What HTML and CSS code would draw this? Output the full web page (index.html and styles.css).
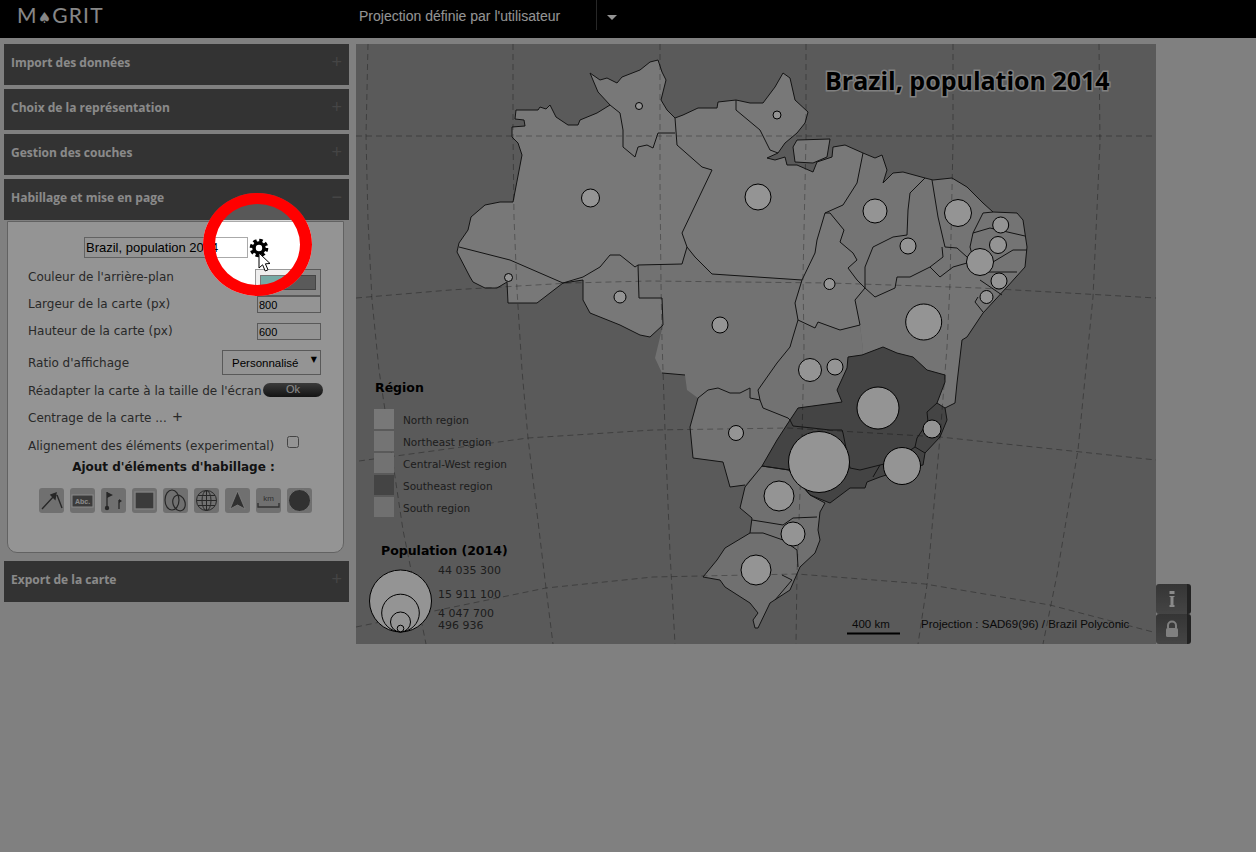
FILE: index.html
```html
<!DOCTYPE html>
<html lang="fr">
<head>
<meta charset="utf-8">
<title>Magrit</title>
<link rel="stylesheet" href="styles.css">
</head>
<body>
<div class="topbar">
  <div class="logo">M<span class="spade">♠</span>GRIT</div>
  <div class="projname">Projection définie par l'utilisateur</div>
  <div class="caretbox"><span class="caret"></span></div>
</div>
<div class="main">
  <div class="sidebar">
    <div class="acc"><span>Import des données</span><b>+</b></div>
    <div class="acc"><span>Choix de la représentation</span><b>+</b></div>
    <div class="acc"><span>Gestion des couches</span><b>+</b></div>
    <div class="acc acc-open"><span>Habillage et mise en page</span><b>−</b></div>
    <div class="panel">
      <div class="titlerow">
        <input class="titleinput" type="text" value="Brazil, population 2014">
        <svg class="gear" width="20" height="20" viewBox="0 0 20 20">
          <circle cx="10" cy="10" r="7.6" fill="none" stroke="#000" stroke-width="3.4" stroke-dasharray="3.4 2.57"/>
          <circle cx="10" cy="10" r="5" fill="none" stroke="#000" stroke-width="3.6"/>
        </svg>
      </div>
      <div class="row row-color"><label>Couleur de l'arrière-plan</label><span class="colorbtn"><span class="colorfill"></span></span></div>
      <div class="row row-w"><label>Largeur de la carte (px)</label><input class="numinput" type="text" value="800"></div>
      <div class="row row-h"><label>Hauteur de la carte (px)</label><input class="numinput" type="text" value="600"></div>
      <div class="row row-ratio"><label>Ratio d'affichage</label><span class="selectwrap"><select class="ratio"><option>Personnalisé</option></select></span></div>
      <div class="row row-fit"><label>Réadapter la carte à la taille de l'écran</label><span class="okbtn">Ok</span></div>
      <div class="row row-center"><label>Centrage de la carte ... <span class="addplus">+</span></label></div>
      <div class="row row-align"><label>Alignement des éléments (experimental)</label><input class="check" type="checkbox"></div>
      <div class="addtitle">Ajout d'éléments d'habillage :</div>
      <div class="tools">
        <span class="tool"><svg viewBox="0 0 25 25"><path d="M3 21 L15 8 M12 7 L17 5 L16 11 Z M18 7 L23 20" fill="#444" stroke="#444" stroke-width="1.4"/></svg></span>
        <span class="tool"><svg viewBox="0 0 25 25"><rect x="2" y="7" width="21" height="12" fill="#666" stroke="#eee"/><text x="12.5" y="16" class="abc">Abc.</text></svg></span>
        <span class="tool"><svg viewBox="0 0 25 25"><path d="M6 4 V19 M18 12 V21" stroke="#444" stroke-width="1.3"/><path d="M6 4 L12 7 L6 10 Z M18 11 L21 13 L18 15 Z" fill="#444"/><circle cx="6" cy="20" r="2.2" fill="#444"/></svg></span>
        <span class="tool"><svg viewBox="0 0 25 25"><rect x="3" y="4" width="19" height="17" fill="#666" stroke="#ddd" stroke-width="1.4"/></svg></span>
        <span class="tool"><svg viewBox="0 0 25 25"><ellipse cx="9" cy="12" rx="7" ry="10" fill="none" stroke="#444" stroke-width="1.2"/><ellipse cx="16" cy="15" rx="6" ry="8" fill="none" stroke="#444" stroke-width="1.2" transform="rotate(-20 16 15)"/></svg></span>
        <span class="tool"><svg viewBox="0 0 25 25" fill="none" stroke="#444"><circle cx="12.5" cy="12.5" r="10"/><ellipse cx="12.5" cy="12.5" rx="4.5" ry="10"/><path d="M12.5 2.5 V22.5 M2.5 12.5 H22.5 M4 7.5 H21 M4 17.5 H21"/></svg></span>
        <span class="tool"><svg viewBox="0 0 25 25"><path d="M12.5 3 L20 21 L12.5 17 L5 21 Z" fill="#555" stroke="#ddd" stroke-width=".8"/></svg></span>
        <span class="tool"><svg viewBox="0 0 25 25"><text x="12.5" y="13" class="km">km</text><path d="M2 15 V19 H23 V15" fill="none" stroke="#555" stroke-width="1.4"/></svg></span>
        <span class="tool"><svg viewBox="0 0 25 25"><circle cx="12.5" cy="12.5" r="11" fill="#555" stroke="#ddd" stroke-width=".8"/></svg></span>
      </div>
    </div>
    <div class="acc acc-export"><span>Export de la carte</span><b>+</b></div>
  </div>

  <svg class="map" width="800" height="600" viewBox="356 44 800 600">
    <!-- regions -->
    <path class="r-north" d="M457 252 L459 243 468 230 471 217 485 205 500 202 513 202 522 155 518 143 512 137 512 127 525 126 524 120 515 119 516 110 538 110 540 107 546 109 550 105 556 117 568 125 578 125 580 120 597 113 610 105 598 92 590 73 600 80 607 78 617 83 622 77 640 70 650 62 658 60 662 72 666 80 661 100 667 110 675 118 683 115 698 108 717 108 718 102 736 100 750 103 763 103 775 87 783 73 790 78 795 100 808 112 805 123 797 133 785 143 778 153 767 158 775 160 785 157 787 165 797 165 813 172 817 162 832 157 833 147 845 145 863 153 857 183 843 205 825 213 830 213 844 230 840 242 853 253 857 260 848 268 857 280 865 288 855 300 860 325 840 330 818 322 815 328 798 320 795 303 802 280 712 274 695 257 687 247 682 264 638 265 639 298 662 298 663 325 650 337 640 335 620 325 590 313 583 300 583 280 563 283 537 303 508 303 507 282 497 288 485 288 473 282 470 277 Z"/>
    <path class="r-north" d="M793 147 L797 140 830 139 827 157 813 163 795 162 Z"/>
    <path class="r-cw" d="M638 265 L682 264 687 247 695 257 712 274 802 280 795 303 798 320 815 328 818 322 840 330 860 325 863 350 862 355 848 357 847 368 837 390 842 402 798 408 790 420 777 440 762 466 745 485 730 487 723 462 693 458 690 427 698 398 687 390 685 375 662 373 655 358 663 325 662 298 639 298 Z"/>
    <path class="r-ne" d="M863 153 L875 158 882 155 887 170 883 183 893 173 903 172 925 178 933 180 952 178 967 187 983 203 993 212 1017 213 1023 220 1027 247 1025 267 1007 287 983 313 967 337 962 340 957 383 955 403 945 408 937 403 945 382 945 375 927 370 913 357 897 353 883 347 862 355 863 350 860 325 855 300 865 288 857 280 848 268 857 260 853 253 840 242 844 230 830 213 825 213 843 205 857 183 Z"/>
    <path class="r-se" d="M790 420 L798 408 842 402 837 390 847 368 848 357 862 355 883 347 897 353 913 357 927 370 945 375 945 382 937 403 945 408 947 420 940 437 925 453 923 465 908 468 880 477 867 482 865 488 850 488 830 503 810 495 789 470 762 466 777 440 Z"/>
    <path class="r-south" d="M762 466 L789 470 810 495 825 503 820 512 818 530 820 540 815 553 800 567 790 590 770 603 758 628 755 628 753 620 758 613 750 603 725 587 720 580 703 577 717 560 725 548 750 533 752 518 740 508 745 487 Z"/>
    <!-- graticule -->
    <g class="grat">
      <path d="M356 136 H1156"/>
      <path d="M356 298 L450 290 570 283 650 281 830 283 980 288 1156 298"/>
      <path d="M359 461 L528 438 653 430 788 428 940 437 1156 460"/>
      <path d="M356 627 L546 588 653 577 797 574 925 584 1050 605 1153 632"/>
      <path d="M368 44 L366 136 368 220 372 300 379 370 403 530 426 644"/>
      <path d="M513 44 V133 L514 217 517 290 522 370 528 438 546 588 553 644"/>
      <path d="M660 44 V183 L661 283 662 340 665 430 670 553 675 644"/>
      <path d="M806 44 V140 L803 277 804 347 802 440 797 573 796 644"/>
      <path d="M953 44 V143 L950 283 947 347 940 437 927 585 918 644"/>
      <path d="M1099 44 L1100 143 1093 297 1078 450 1057 575 1043 644"/>
    </g>
    <!-- outlines, same points as above plus the inner borders -->
    <g class="borders">
      <path d="M457 252 L459 243 468 230 471 217 485 205 500 202 513 202 522 155 518 143 512 137 512 127 525 126 524 120 515 119 516 110 538 110 540 107 546 109 550 105 556 117 568 125 578 125 580 120 597 113 610 105 598 92 590 73 600 80 607 78 617 83 622 77 640 70 650 62 658 60 662 72 666 80 661 100 667 110 675 118 683 115 698 108 717 108 718 102 736 100 750 103 763 103 775 87 783 73 790 78 795 100 808 112 805 123 797 133 785 143 778 153 767 158 775 160 785 157 787 165 797 165 813 172 817 162 832 157 833 147 845 145 863 153 857 183 843 205 825 213 830 213 844 230 840 242 853 253 857 260 848 268 857 280 865 288 855 300 860 325 840 330 818 322 815 328 798 320 795 303 802 280 712 274 695 257 687 247 682 264 638 265 639 298 662 298 663 325 650 337 640 335 620 325 590 313 583 300 583 280 563 283 537 303 508 303 507 282 497 288 485 288 473 282 470 277 Z"/>
      <path d="M793 147 L797 140 830 139 827 157 813 163 795 162 Z"/>
      <path d="M459 247 L510 260 563 283 M610 105 L620 113 623 130 623 147 635 157 638 147 647 145 653 148 658 133 675 133 M675 118 L677 145 702 167 712 170 682 233 687 247 M563 283 L583 277 600 267 610 255 620 255 635 267 638 265 M736 100 L736 110 760 130 770 150 778 153 M825 213 L817 240 815 253 802 280"/>
      <path d="M798 320 L792 340 790 347 777 363 758 390 760 400 750 398 750 388 740 393 730 393 718 388 708 390 698 398 M760 400 L763 408 788 418 790 420 M662 373 L685 375"/>
      <path d="M863 153 L875 158 882 155 887 170 883 183 893 173 903 172 925 178 933 180 952 178 967 187 983 203 993 212 1017 213 1023 220 1027 247 1025 267 1007 287 983 313 967 337 962 340 957 383 955 403 945 408"/>
      <path d="M925 178 L910 193 908 210 907 235 893 237 873 247 865 267 865 288 875 297 895 288 897 277 910 277 930 267 943 257 942 247 M932 180 L938 217 945 247 957 248 967 257 M930 267 L940 277 953 267 967 263 M993 212 L983 213 973 233 970 247 973 258 M973 233 L990 228 1025 236 M993 262 L1013 250 1027 250 M977 272 L1017 272 M980 280 L1002 295 M978 297 L975 302 983 312"/>
      <path d="M790 420 L798 408 842 402 837 390 847 368 848 357 862 355 883 347 897 353 913 357 927 370 945 375 945 382 937 403 945 408 947 420 940 437 925 453 923 465 908 468 880 477 867 482 865 488 850 488 830 503 810 495 789 470 762 466 777 440 Z"/>
      <path d="M937 403 L927 412 928 422 917 438 915 447 925 453 M915 447 L893 462 880 465 860 470 850 468 843 433 842 430 830 430 812 428 793 426 790 420 M880 465 L873 477"/>
      <path d="M762 466 L789 470 810 495 825 503 820 512 818 530 820 540 815 553 800 567 790 590 770 603 758 628 755 628 753 620 758 613 750 603 725 587 720 580 703 577 717 560 725 548 750 533 752 518 740 508 745 487 Z"/>
      <path d="M752 520 L783 525 793 518 817 517 M750 533 L763 533 783 540 797 550 798 567 M782 575 L792 580 775 600"/>
      <path d="M745 485 L730 487 723 462 693 458 690 427 698 398"/>
    </g>
    <!-- population circles -->
    <g class="props">
      <circle cx="639" cy="106" r="3.5"/><circle cx="777" cy="115" r="4"/><circle cx="590.5" cy="198" r="9"/>
      <circle cx="758" cy="197" r="13"/><circle cx="508.5" cy="277.5" r="4"/><circle cx="620" cy="297" r="6"/>
      <circle cx="720" cy="325" r="8"/><circle cx="829.5" cy="284" r="5.5"/><circle cx="875" cy="211" r="12"/>
      <circle cx="908" cy="246" r="8"/><circle cx="958" cy="213" r="13.5"/><circle cx="1000.7" cy="225" r="8"/>
      <circle cx="998" cy="245" r="8.5"/><circle cx="980" cy="262" r="13.5"/><circle cx="999" cy="281" r="8"/>
      <circle cx="986.5" cy="297" r="6.5"/><circle cx="923.7" cy="322" r="18"/><circle cx="810" cy="370" r="11.5"/>
      <circle cx="835" cy="367" r="8"/><circle cx="878" cy="408" r="21"/><circle cx="932" cy="429" r="9"/>
      <circle cx="902" cy="466" r="18.5"/><circle cx="819" cy="462" r="30.5"/><circle cx="736" cy="433" r="7.5"/>
      <circle cx="779" cy="496" r="15"/><circle cx="793" cy="534" r="12"/><circle cx="756" cy="570" r="15"/>
    </g>
    <text class="maptitle" x="825" y="90">Brazil, population 2014</text>
    <!-- legend -->
    <text class="legtitle" x="375" y="392">Région</text>
    <rect class="r-north" x="374" y="409" width="20" height="20"/><text class="legtext" x="403" y="424">North region</text>
    <rect class="r-ne" x="374" y="431" width="20" height="20"/><text class="legtext" x="403" y="446">Northeast region</text>
    <rect class="r-cw" x="374" y="453" width="20" height="20"/><text class="legtext" x="403" y="468">Central-West region</text>
    <rect class="r-se" x="374" y="475" width="20" height="20"/><text class="legtext" x="403" y="490">Southeast region</text>
    <rect class="r-south" x="374" y="497" width="20" height="20"/><text class="legtext" x="403" y="512">South region</text>
    <text class="legtitle" x="381" y="555">Population (2014)</text>
    <g class="props">
      <circle cx="400.5" cy="601" r="31"/><circle cx="400.5" cy="613" r="18.8"/>
      <circle cx="400.5" cy="622" r="10"/><circle cx="400.5" cy="628.5" r="3.3"/>
    </g>
    <text class="legval" x="438" y="574">44 035 300</text>
    <text class="legval" x="438" y="598">15 911 100</text>
    <text class="legval" x="438" y="617">4 047 700</text>
    <text class="legval" x="438" y="629">496 936</text>
    <text class="scale" x="852" y="628">400 km</text>
    <path d="M847 633.5 H900" stroke="#000" stroke-width="2"/>
    <text class="scale" x="921" y="628">Projection : SAD69(96) / Brazil Polyconic</text>
  </svg>

  <div class="sidebtns">
    <span class="sbtn"><svg width="14" height="18" viewBox="0 0 14 18"><path d="M4.5 1 H9.5 V4 H4.5 Z M4.5 6 H9.5 V7 H8.5 V15 H9.5 V17 H4.5 V15 H5.5 V7 H4.5 Z" fill="#eee"/></svg></span>
    <span class="sbtn"><svg width="16" height="18" viewBox="0 0 16 18"><path d="M4 8 V5.5 a4 4 0 0 1 8 0 V8" fill="none" stroke="#ddd" stroke-width="2"/><rect x="2" y="8" width="12" height="9" rx="1.5" fill="#ddd"/></svg></span>
  </div>
</div>

<div class="dim"><div class="ring"></div></div>
<svg class="pointer" width="16" height="22" viewBox="0 0 16 22"><path d="M1 1 V16 L4.6 12.8 L7.2 19 L10 17.8 L7.4 11.8 L12 11.5 Z" fill="#fff" stroke="#000"/></svg>
</body>
</html>
```

FILE: styles.css
```css
html,body{margin:0;padding:0;height:100%;overflow:hidden;}
body{background:#dcdcdc;font-family:"DejaVu Sans",sans-serif;color:#484848;position:relative;}

.topbar{height:38px;background:#000;display:flex;align-items:flex-start;}
.logo{width:359px;padding-left:17px;box-sizing:border-box;font-family:Lato,sans-serif;font-size:21px;line-height:30px;color:#e8e8e8;letter-spacing:1.2px;}
.spade{font-family:"DejaVu Sans",sans-serif;font-size:15px;letter-spacing:1px;}
.projname{width:237px;font-family:"Liberation Sans",sans-serif;font-size:14px;line-height:32px;color:#fff;}
.caretbox{height:30px;border-left:1px solid #444;padding:15px 0 0 10px;box-sizing:border-box;}
.caret{display:block;width:0;height:0;border:5px solid transparent;border-top-color:#fff;border-bottom:0;}

.main{display:flex;align-items:flex-start;padding:6px 0 0 4px;}
.sidebar{width:345px;margin-right:7px;}
.acc{height:41px;margin-bottom:4px;background:#585858;padding:10px 7px 0 7px;box-sizing:border-box;display:flex;justify-content:space-between;font-family:"Open Sans",sans-serif;font-weight:700;font-size:12px;line-height:17px;color:#eee;}
.acc b{font-family:"Liberation Sans",sans-serif;font-weight:400;font-size:18px;line-height:16px;color:#777;}
.acc-open{margin-bottom:1px;}
.acc-export{margin-bottom:0;}

.panel{width:337px;height:332px;margin:0 0 8px 3px;box-sizing:border-box;background:#fff;border:1px solid #aaa;border-radius:0 0 10px 10px;padding:15px 22px 0 20px;}
.panel label{font-size:12px;line-height:16px;}
.titlerow{display:flex;align-items:center;height:21px;margin:0 0 11px 56px;}
.titleinput{width:164px;height:21px;box-sizing:border-box;border:1px solid #aaa;padding:0 1px;font-family:"Liberation Sans",sans-serif;font-size:13px;color:#000;background:#fff;}
.gear{margin-left:1px;}

.row{display:flex;justify-content:space-between;}
.row-color{height:27px;}
.row-color label{margin-top:0;}
.colorbtn{width:66px;height:27px;box-sizing:border-box;border:1px solid #999;background:#eee;padding:5px 4px;margin-right:0;}
.colorfill{display:block;height:15px;border:1px solid #777;box-sizing:border-box;background:linear-gradient(to right,#76aaa5 50%,#9b9b9b 50%);}
.row-w{height:17px;margin-bottom:10px;}
.row-h{height:17px;margin-bottom:10px;}
.numinput{width:64px;height:17px;box-sizing:border-box;border:1px solid #999;padding:0 1px;font-family:"Liberation Sans",sans-serif;font-size:11px;color:#000;background:#fff;}
.row-ratio{height:25px;margin-bottom:8px;align-items:center;}
.selectwrap{position:relative;display:block;width:99px;height:25px;}
.selectwrap::after{content:"▼";position:absolute;right:4px;top:5px;font-size:8px;color:#000;}
.ratio{appearance:none;-webkit-appearance:none;width:99px;height:25px;border:1px solid #999;border-radius:0;padding:0 0 0 9px;background:#fff;font-family:"Liberation Sans",sans-serif;font-size:11.5px;color:#000;}
.row-fit{height:16px;margin-bottom:11px;}
.okbtn{display:block;width:60px;height:14px;margin:0 -2px 0 0;border-radius:7px;background:linear-gradient(#666,#222);color:#eee;text-align:center;font-family:"Liberation Sans",sans-serif;font-size:11px;line-height:13px;}
.row-center{height:16px;margin-bottom:12px;}
.addplus{font-family:"Liberation Sans",sans-serif;font-size:17px;line-height:12px;margin-left:2px;}
.row-align{height:16px;margin-bottom:5px;}
.check{margin:-2px 22px 0 0;width:12px;height:12px;}
.addtitle{font-weight:700;font-size:12px;line-height:16px;text-align:center;color:#222;margin:0 0 0 -2px;}
.tools{display:flex;gap:6px;margin:13px 0 0 11px;}
.tool{display:block;width:25px;height:25px;border-radius:3px;background:#c2c2c2;}
.tool svg{display:block;width:25px;height:25px;}
.abc{font-family:"Liberation Sans",sans-serif;font-weight:700;font-size:7px;fill:#eee;text-anchor:middle;}
.km{font-family:"Liberation Sans",sans-serif;font-size:8px;fill:#555;text-anchor:middle;}

.map{display:block;background:#9b9b9b;flex:none;}
.r-north{fill:#cfcfcf;}
.r-ne{fill:#c8c8c8;}
.r-cw{fill:#c5c5c5;}
.r-se{fill:#757575;}
.r-south{fill:#c2c2c2;}
.grat path{fill:none;stroke:rgba(0,0,0,.3);stroke-width:1;stroke-dasharray:6 4;}
.borders path{fill:none;stroke:#222;stroke-width:1;stroke-linejoin:round;}
.props circle{fill:#fff;stroke:#000;stroke-width:1;}
.maptitle{font-family:"Open Sans",sans-serif;font-weight:700;font-size:25px;fill:#000;stroke:#ddd;stroke-width:3px;paint-order:stroke;}
.legtitle{font-weight:700;font-size:12.5px;fill:#000;}
.legtext{font-size:10.5px;fill:#333;}
.legval{font-size:11px;fill:#333;}
.scale{font-family:"Liberation Sans",sans-serif;font-size:11.5px;fill:#111;}

.sidebtns{align-self:flex-start;margin-top:540px;display:flex;flex-direction:column;}
.sbtn{display:flex;align-items:center;justify-content:center;width:35px;height:30px;box-sizing:border-box;border-right:4px solid #3c3c3c;border-radius:3px;background:linear-gradient(#5c5c5c,#777);}

/* tour overlay */
.dim{position:absolute;left:0;top:0;right:0;bottom:0;overflow:hidden;pointer-events:none;}
.ring{position:absolute;left:203px;top:193px;width:109px;height:103px;box-sizing:border-box;border-style:solid;border-color:#f00;border-width:11px 12px;border-radius:50%;box-shadow:0 0 0 2000px rgba(0,0,0,.42);}
.pointer{position:absolute;left:258px;top:252px;}
```
